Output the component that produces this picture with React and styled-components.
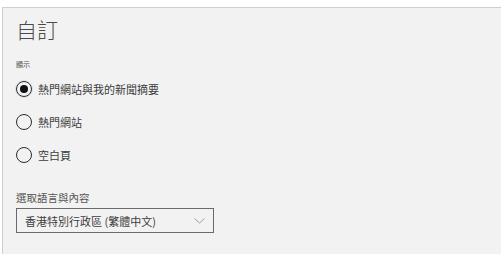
import React, { useState } from "react";
import styled, { createGlobalStyle } from "styled-components";

const GlobalStyle = createGlobalStyle`
  html, body {
    margin: 0;
    padding: 0;
    background: #fff;
    height: 254px;
    overflow: hidden;
  }
  body {
    font-family: "Noto Sans CJK TC", "Noto Sans", sans-serif;
    color: #333;
  }
`;

const Page = styled.div`
  padding: 7px 0 0 2px;
  height: 254px;
  box-sizing: border-box;
`;

const Panel = styled.section`
  height: 100%;
  box-sizing: border-box;
  background: #f2f2f2;
  border-top: 1px solid #cfcfcf;
  border-left: 1px solid #cfcfcf;
  padding: 8px 0 0 13px;
`;

const Title = styled.h1`
  margin: 0;
  font-size: 21px;
  line-height: 26px;
  font-weight: 300;
  color: #4a4a4a;
`;

const SmallLabel = styled.div`
  margin-top: 18px;
  font-size: 7px;
  line-height: 9px;
  color: #4d4d4d;
`;

const RadioList = styled.div`
  display: flex;
  flex-direction: column;
  gap: 17px;
  margin-top: 12px;
`;

const RadioRow = styled.label`
  display: flex;
  align-items: center;
  gap: 6px;
  cursor: pointer;
  font-size: 11px;
  line-height: 16px;
  color: #3c3c3c;
`;

const RadioCircle = styled.span`
  width: 16px;
  height: 16px;
  box-sizing: border-box;
  border-radius: 50%;
  border: 1.5px solid #2b2b2b;
  display: flex;
  align-items: center;
  justify-content: center;
  box-shadow: ${(p) => (p.$checked ? "0 0 0 1px #d3e2ef" : "none")};

  &::after {
    content: "";
    width: 8px;
    height: 8px;
    border-radius: 50%;
    background: #111;
    display: ${(p) => (p.$checked ? "block" : "none")};
  }
`;

const FieldLabel = styled.div`
  margin-top: 28px;
  font-size: 10.5px;
  line-height: 14px;
  color: #555;
`;

const Select = styled.button`
  margin-top: 3px;
  width: 198px;
  height: 25px;
  box-sizing: border-box;
  border: 1.5px solid #6a6a6a;
  background: #f2f2f2;
  display: flex;
  align-items: center;
  justify-content: space-between;
  padding: 0 8px 0 8px;
  font-family: inherit;
  font-size: 11px;
  color: #3c3c3c;
  cursor: pointer;
`;

const Chevron = () => (
  <svg width="11" height="6" viewBox="0 0 11 6" fill="none">
    <path d="M0.5 0.5 L5.5 5 L10.5 0.5" stroke="#9a9a9a" strokeWidth="1" />
  </svg>
);

const options = ["熱門網站與我的新聞摘要", "熱門網站", "空白頁"];

export default function App() {
  const [choice, setChoice] = useState(0);

  return (
    <>
      <GlobalStyle />
      <Page>
        <Panel>
          <Title>自訂</Title>
          <SmallLabel>顯示</SmallLabel>
          <RadioList>
            {options.map((text, i) => (
              <RadioRow key={text} onClick={() => setChoice(i)}>
                <RadioCircle $checked={choice === i} />
                {text}
              </RadioRow>
            ))}
          </RadioList>
          <FieldLabel>選取語言與內容</FieldLabel>
          <Select>
            <span>香港特別行政區 (繁體中文)</span>
            <Chevron />
          </Select>
        </Panel>
      </Page>
    </>
  );
}
